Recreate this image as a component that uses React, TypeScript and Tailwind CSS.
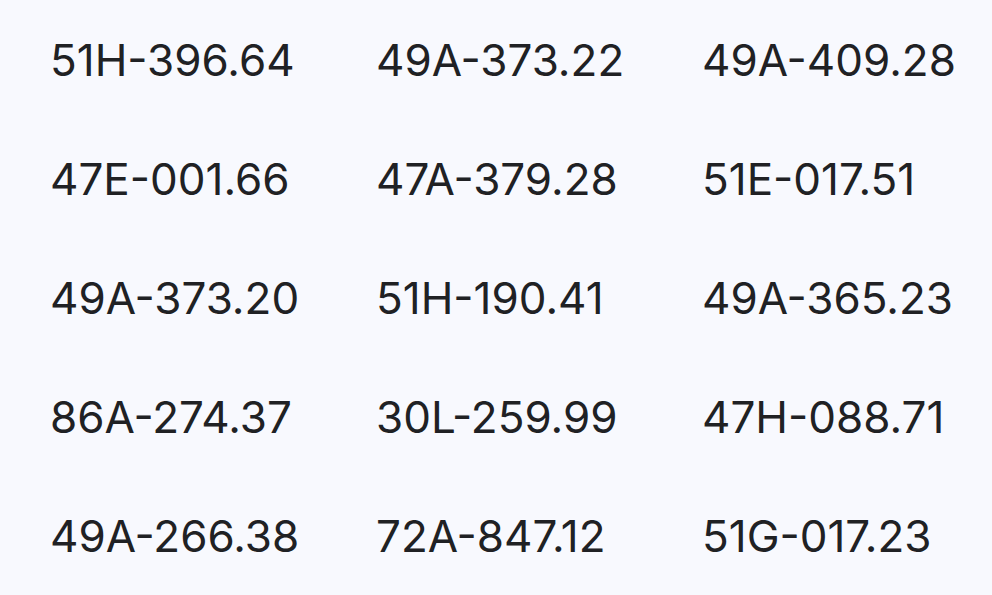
import React from 'react';

const plates = [
  '51H-396.64', '49A-373.22', '49A-409.28',
  '47E-001.66', '47A-379.28', '51E-017.51',
  '49A-373.20', '51H-190.41', '49A-365.23',
  '86A-274.37', '30L-259.99', '47H-088.71',
  '49A-266.38', '72A-847.12', '51G-017.23',
];

export default function App() {
  return (
    <div className="w-[992px] h-[595px] bg-[#f8f9fe] overflow-hidden">
      <div className="grid grid-cols-[326px_326px_340px] auto-rows-[119px] pl-[50px] font-['Inter',sans-serif] text-[44px] text-[#202124]">
        {plates.map((p) => (
          <div key={p} className="flex items-center leading-none">
            {p}
          </div>
        ))}
      </div>
    </div>
  );
}
